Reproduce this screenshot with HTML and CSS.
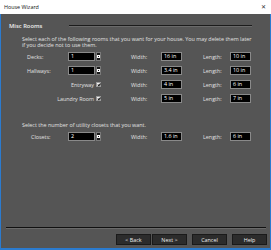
FILE: index.html
```html
<!DOCTYPE html>
<html lang="en">
<head>
    <meta charset="UTF-8">
    <title>House Wizard</title>
    <link rel="stylesheet" href="styles.css">
</head>
<body>
    <div class="titlebar">
        <span class="title">House Wizard</span>
        <span class="close">&#x2715;</span>
    </div>
    <div class="frame">
        <div class="section-head">
            <span class="section-title">Misc Rooms</span>
            <span class="section-line"></span>
        </div>
        <p class="intro">Select each of the following rooms that you want for your house. You may delete them later if you decide not to use them.</p>

        <div class="rooms">
            <span class="label">Decks:</span>
            <span class="ctl"><span class="field field-wide">1</span><span class="spin"></span></span>
            <span class="label">Width:</span>
            <span class="field">16 in</span>
            <span class="label">Length:</span>
            <span class="field">10 in</span>

            <span class="label">Hallways:</span>
            <span class="ctl"><span class="field field-wide">1</span><span class="spin"></span></span>
            <span class="label">Width:</span>
            <span class="field">3.4 in</span>
            <span class="label">Length:</span>
            <span class="field">10 in</span>

            <span class="check-cell">Entryway <span class="check"></span></span>
            <span class="label">Width:</span>
            <span class="field">4 in</span>
            <span class="label">Length:</span>
            <span class="field">6 in</span>

            <span class="check-cell">Laundry Room <span class="check"></span></span>
            <span class="label">Width:</span>
            <span class="field">5 in</span>
            <span class="label">Length:</span>
            <span class="field">7 in</span>
        </div>

        <p class="intro intro-closets">Select the number of utility closets that you want.</p>

        <div class="rooms rooms-closets">
            <span class="label label-indent">Closets:</span>
            <span class="ctl"><span class="field field-wide">2</span><span class="spin"></span></span>
            <span class="label">Width:</span>
            <span class="field">1.6 in</span>
            <span class="label">Length:</span>
            <span class="field">6 in</span>
        </div>

        <div class="footer">
            <div class="footer-line"></div>
            <div class="buttons">
                <button class="button">&lt; Back</button>
                <button class="button button-next">Next &gt;</button>
                <button class="button">Cancel</button>
                <button class="button">Help</button>
            </div>
        </div>
    </div>
</body>
</html>
```

FILE: styles.css
```css
body {
    margin: 0;
    width: 271px;
    height: 250px;
    display: flex;
    flex-direction: column;
    font-family: "Open Sans", "Noto Sans", sans-serif;
    font-size: 5.4px;
    color: #e2e2e2;
    background-color: #555555;
    overflow: hidden;
}

.titlebar {
    height: 14px;
    background-color: #ffffff;
    display: flex;
    align-items: center;
    justify-content: space-between;
    padding: 0 5px 0 4px;
    color: #111111;
    flex-shrink: 0;
}

.close {
    font-size: 6px;
    color: #333333;
}

.frame {
    flex: 1;
    display: flex;
    flex-direction: column;
    border: 2px solid #2b7bcf;
    border-width: 0 1px 2px 1px;
    background-color: #555555;
}

.section-head {
    display: flex;
    align-items: center;
    height: 6px;
    margin-top: 9px;
    padding-left: 8px;
}

.section-title {
    width: 60px;
    font-size: 5.8px;
    font-weight: 600;
    color: #eeeeee;
}

.section-line {
    width: 183px;
    height: 0;
    border-top: 1px solid #1c1c1c;
    border-bottom: 1px solid #6a6a6a;
}

.intro {
    margin: 7px 0 0 21px;
    width: 232px;
    line-height: 6px;
}

.rooms {
    display: grid;
    grid-template-columns: 41px 63px 30px 42px 27px 21px;
    grid-auto-rows: 9px;
    row-gap: 5px;
    align-items: center;
    margin-top: 4px;
    padding-left: 26px;
}

.label {
    white-space: nowrap;
}

.label-indent {
    padding-left: 4px;
}

.ctl {
    display: flex;
    align-items: center;
    gap: 1px;
    height: 9px;
}

.field {
    box-sizing: border-box;
    width: 21px;
    height: 9px;
    background-color: #000000;
    border: 1px solid #8a8a8a;
    color: #ffffff;
    padding-left: 2px;
    line-height: 7px;
    white-space: nowrap;
}

.field-wide {
    width: 27px;
}

.spin {
    box-sizing: border-box;
    width: 5px;
    height: 9px;
    background-color: #1a1a1a;
    border: 1px solid #7a7a7a;
    display: flex;
    align-items: center;
    justify-content: center;
}

.spin::after {
    content: "";
    width: 1px;
    height: 1px;
    border: 0.5px solid #ffffff;
}

.check-cell {
    grid-column: 1 / 3;
    width: 74px;
    display: flex;
    justify-content: flex-end;
    align-items: center;
    gap: 2px;
}

.check {
    box-sizing: border-box;
    width: 5px;
    height: 5px;
    background-color: #f2f2f2;
    border: 0.5px solid #9a9a9a;
    position: relative;
}

.check::after {
    content: "";
    position: absolute;
    left: 1.3px;
    top: 0.2px;
    width: 1.2px;
    height: 2.4px;
    border: solid #111111;
    border-width: 0 0.8px 0.8px 0;
    transform: rotate(40deg);
}

.intro-closets {
    margin-top: 18.5px;
}

.rooms-closets {
    margin-top: 4.5px;
}

.footer {
    margin-top: auto;
    padding: 0 3px 3px 5px;
}

.footer-line {
    border-top: 1px solid #111111;
    border-bottom: 1px solid #6a6a6a;
    margin-right: 1px;
}

.buttons {
    display: flex;
    justify-content: flex-end;
    margin-top: 5px;
}

.button {
    box-sizing: border-box;
    width: 35px;
    height: 11px;
    margin-left: 5px;
    padding: 0;
    background-color: #2c2c2c;
    border: 1px solid #1a1a1a;
    color: #eeeeee;
    font-family: inherit;
    font-size: 5.4px;
}

.button-next {
    margin-left: 1px;
}
```
